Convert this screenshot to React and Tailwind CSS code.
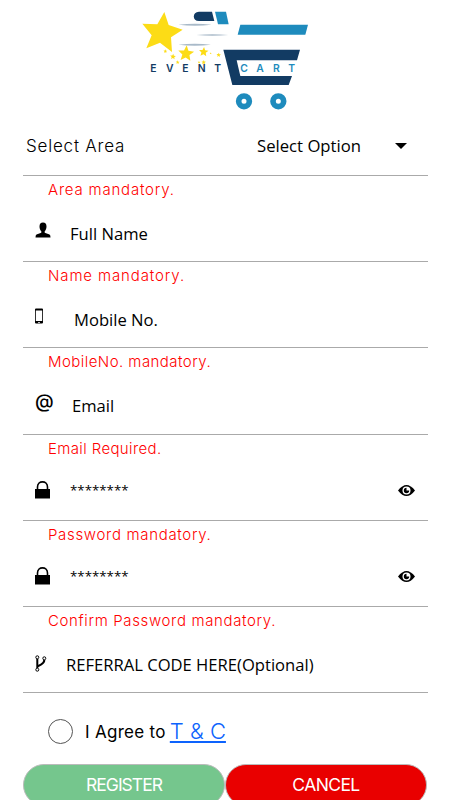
import React from 'react';
import { useState } from 'react';

const starPoints = (cx, cy, r) => {
  const points = [];
  for (let i = 0; i < 10; i++) {
    const radius = i % 2 === 0 ? r : r * 0.45;
    const angle = (Math.PI / 5) * i - Math.PI / 2 + 0.08;
    points.push(`${cx + radius * Math.cos(angle)},${cy + radius * Math.sin(angle)}`);
  }
  return points.join(' ');
};

const smallStars = [
  [106, 154, 6],
  [129, 170, 9],
  [168, 161, 25],
  [143, 187, 6],
  [207, 187, 4],
  [221, 187, 7],
  [221, 156, 15],
  [242, 160, 3],
  [266, 165, 7],
];

const Logo = () => (
  <svg viewBox="0 0 570 360" className="w-[190px] h-[120px]" role="img" aria-label="Event Cart">
    <g fill="#fcdc16">
      <polygon points="103,36 116,75 158,89 123,112 126,156 90,128 49,145 65,106 37,71 82,73" />
      {smallStars.map(([x, y, r]) => (
        <polygon key={`${x}-${y}`} points={starPoints(x, y, r)} />
      ))}
    </g>
    <g fill="#a9bac9">
      <path d="M145 74Q195 68 245 74Q195 80 145 74Z" />
      <path d="M199 105Q247 100 295 105Q247 110 199 105Z" />
      <path d="M145 134Q195 128 243 134Q195 140 145 134Z" />
    </g>
    <g fill="#123b63">
      <path d="M207 35H246L253 63H207C186 63 186 35 207 35Z" />
      <path d="M280 149H510L501 181H320L331 228H486L476 255H307Z" />
    </g>
    <g fill="#1e8bbd">
      <path d="M255 35H288L296 73H264Z" />
      <path d="M331 74H534L526 104H323Z" />
    </g>
    <g fill="none" stroke="#1e8bbd" strokeWidth="17">
      <circle cx="342" cy="304" r="16" />
      <circle cx="445" cy="304" r="16" />
    </g>
    <g fontFamily="Inter, sans-serif" fontSize="31" fontWeight="600">
      <text y="215" x="61 108 157 203 253" fill="#123b63">EVENT</text>
      <text y="215" x="331 379 429 475" fill="#1e8bbd">CART</text>
    </g>
  </svg>
);

const UserIcon = () => (
  <svg viewBox="0 0 16 16" className="w-4 h-4">
    <path d="M8 .5C5.600.5 4.500 2 4.500 4.500C4.500 6.500 5.300 8.300 6.300 9.300V10.800L1.500 12.600Q.5 13.100.5 15.500H15.500Q15.500 13.100 14.500 12.600L9.700 10.800V9.300C10.700 8.300 11.500 6.500 11.500 4.500C11.500 2 10.400.5 8 .5Z" />
  </svg>
);

const PhoneIcon = () => (
  <svg viewBox="0 0 8 16" className="w-2 h-4">
    <path fillRule="evenodd" d="M1 .5H7Q8 .5 8 1.500V14.500Q8 15.500 7 15.500H1Q0 15.500 0 14.500V1.500Q0 .5 1 .5ZM.8 2.500V13H7.200V2.500ZM3 14V14.800H5V14Z" />
  </svg>
);

const AtIcon = () => (
  <span className="block w-[18px] text-[19px] leading-[18px] font-medium font-[Inter,sans-serif]">@</span>
);

const LockIcon = () => (
  <svg viewBox="0 0 15 18" className="w-[15px] h-[18px]">
    <path d="M0 8H15V17.500H0Z" />
    <path d="M2.500 9V6C2.500-.8 12.500-.8 12.500 6V9" fill="none" stroke="#000" strokeWidth="1.600" />
  </svg>
);

const ForkIcon = () => (
  <svg viewBox="0 0 12 17" className="w-3 h-[17px]" fill="none" stroke="#000">
    <circle cx="2.300" cy="2.300" r="1.500" />
    <circle cx="9.300" cy="3.300" r="1.500" />
    <circle cx="2.300" cy="14.700" r="1.500" />
    <path d="M2.300 4V13M9.300 5C9.300 9 7 8.500 2.500 11.500" strokeWidth="2" />
  </svg>
);

const EyeIcon = () => (
  <svg viewBox="0 0 17 11" className="w-[17px] h-[11px]">
    <path d="M0 5.500Q8.500-5.500 17 5.500Q8.500 16.500 0 5.500Z" />
    <circle cx="8.500" cy="5.500" r="4" fill="#fff" />
    <path d="M8.500 2.800A2.700 2.700 0 1 0 11.200 5.500H8.500Z" />
  </svg>
);

// error is the message left by the field above
const fields = [
  { name: 'fullName', label: 'Full Name', error: 'Area mandatory.', errorStyle: 'tracking-[0.8px]', Icon: UserIcon, iconStyle: 'pt-[19px]', textStyle: 'pl-[19px]' },
  { name: 'mobile', label: 'Mobile No.', error: 'Name mandatory.', errorStyle: 'tracking-[0.88px]', Icon: PhoneIcon, iconStyle: 'pt-[19px]', textStyle: 'pl-[23px]' },
  { name: 'email', label: 'Email', error: 'MobileNo. mandatory.', errorStyle: 'tracking-[0.45px]', Icon: AtIcon, iconStyle: 'pt-[18px]', textStyle: 'pl-[21px]' },
  { name: 'password', label: '********', error: 'Email Required.', errorStyle: 'tracking-[0.37px]', Icon: LockIcon, iconStyle: 'pt-[19px]', textStyle: 'pl-[19px]', secret: true },
  { name: 'confirm', label: '********', error: 'Password mandatory.', errorStyle: 'tracking-[0.68px]', Icon: LockIcon, iconStyle: 'pt-[19px]', textStyle: 'pl-[19px]', secret: true },
  { name: 'referral', label: 'REFERRAL CODE HERE(Optional)', error: 'Confirm Password mandatory.', errorStyle: 'tracking-[0.64px]', Icon: ForkIcon, iconStyle: 'pt-[21px]', textStyle: 'pl-[15px]' },
];

const App = () => {
  const [agree, setAgree] = useState(false);

  return (
    <div className="h-[800px] overflow-hidden bg-white text-black font-['Open_Sans',sans-serif]">
      <div className="flex justify-center h-[120px]">
        <Logo />
      </div>

      <div className="w-[405px] ml-[23px]">
        {/* Area */}
        <div className="flex items-center h-14 border-b border-[#aaaaaa] pl-[3px] pb-1">
          <span className="w-[231px] pt-[3px] text-[17px] font-light tracking-[0.8px] font-[Inter,sans-serif]">Select Area</span>
          <span className="w-[138px] pt-px text-[16.7px]">Select Option</span>
          <svg viewBox="0 0 12 6" className="w-3 h-1.5">
            <path d="M0 0H12L6 6Z" />
          </svg>
        </div>

        {fields.map(({ name, label, error, errorStyle, Icon, iconStyle, textStyle, secret }) => (
          <div key={name} className="h-[86.2px] border-b border-[#aaaaaa]">
            <p className={`h-[27px] pl-[25px] text-[15px] leading-[28px] font-light text-[#ff0000] font-[Inter,sans-serif] ${errorStyle}`}>{error}</p>
            <div className="flex pl-3">
              <div className={`w-4 ${iconStyle}`}>
                <Icon />
              </div>
              <div className={`${textStyle} ${secret ? 'text-[13.3px] pt-[15px]' : 'text-[16.6px] pt-[18px]'} flex-1 leading-[26px]`}>{label}</div>
              {secret && (
                <button type="button" className="pr-[13px] pt-4" aria-label="Show password">
                  <EyeIcon />
                </button>
              )}
            </div>
          </div>
        ))}

        {/* Terms */}
        <div className="flex items-center h-[71px] pl-[25px] pt-[5px] font-[Inter,sans-serif]">
          <button
            type="button"
            aria-label="Agree"
            onClick={() => setAgree(!agree)}
            className={`w-[25px] h-[25px] rounded-full border border-[#555555] ${agree ? 'bg-[#1a6dff]' : 'bg-white'}`}
          />
          <span className="pl-3 pt-[3px] text-[17px] tracking-[0.3px]">I Agree to</span>
          <a href="#terms" className="ml-1 text-[22px] font-light text-[#0d63fd] underline">T &amp; C</a>
        </div>

        <div className="flex font-[Inter,sans-serif] text-[17.5px] text-white">
          <button type="button" className="w-[202px] h-[42px] rounded-full border border-[#bbbbbb] bg-[#75c68d] tracking-[-1px]">REGISTER</button>
          <button type="button" className="w-[202px] h-[42px] rounded-full border border-[#bbbbbb] bg-[#e90000] tracking-[-0.6px]">CANCEL</button>
        </div>
      </div>
    </div>
  );
};

export default App;
